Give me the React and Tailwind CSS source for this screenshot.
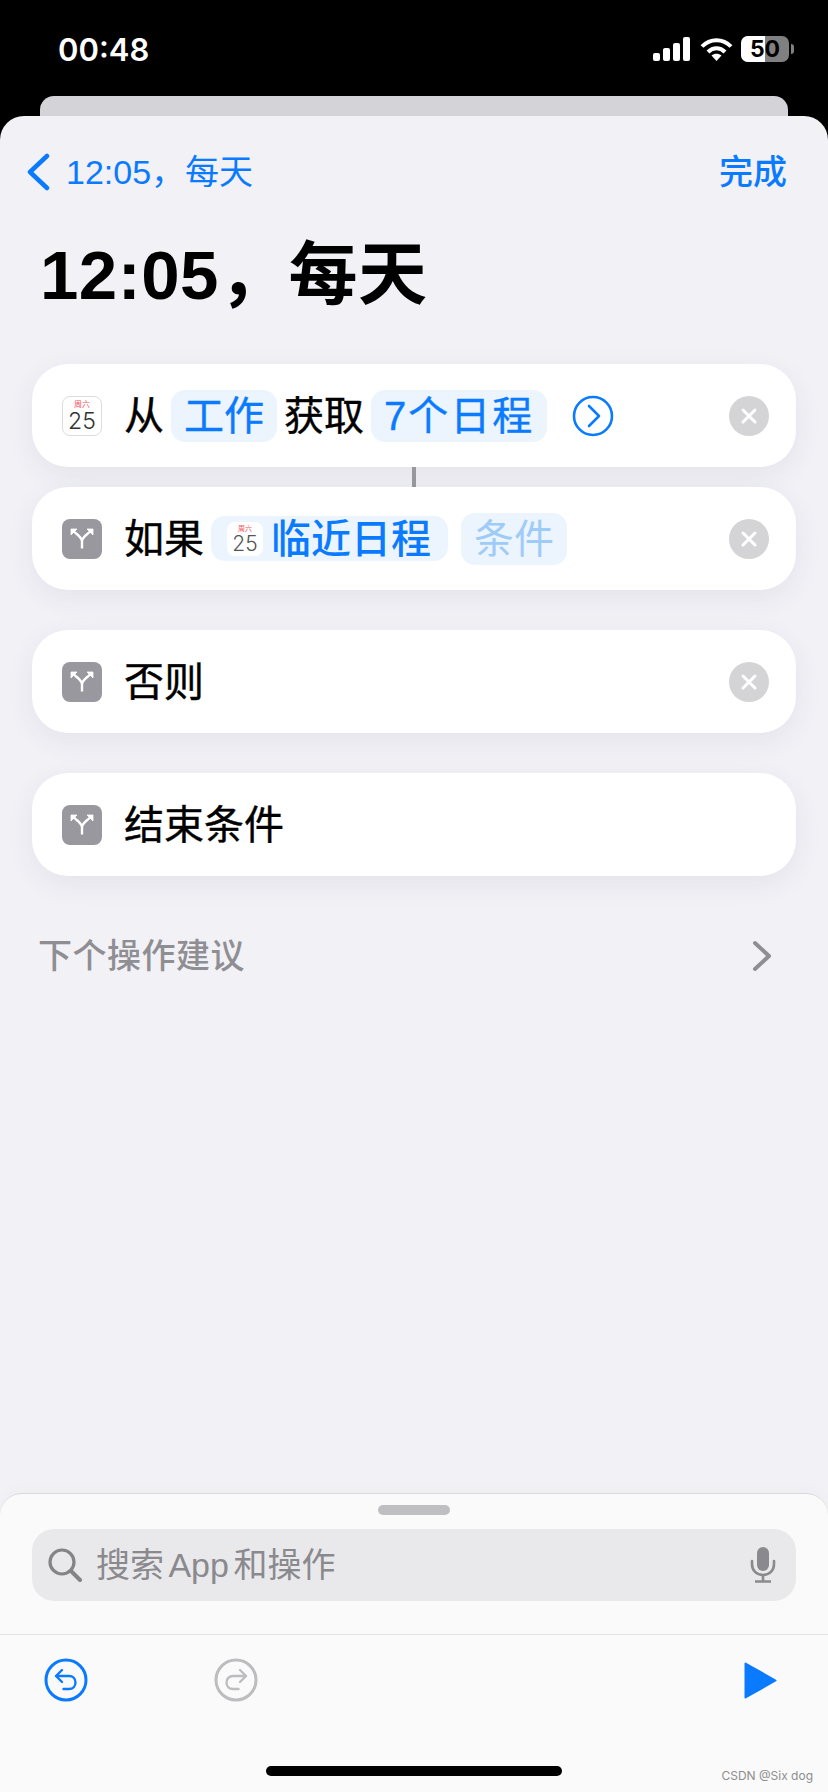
const CJK = '"Liberation Sans","Noto Sans CJK SC",sans-serif';

function CalendarIcon() {
  return (
    <div className="flex h-10 w-10 shrink-0 flex-col items-center rounded-[8px] border border-[#dcdcde] bg-white [-webkit-text-stroke:0]">
      <span className="mt-[3px] h-[9px] text-[8px] leading-[9px] font-normal text-[#f2505a]">周六</span>
      <span className="font-['Inter'] text-[23px] leading-[24px] font-light text-[#333]">25</span>
    </div>
  );
}

function SmallCalendar() {
  return (
    <div className="flex h-[34px] w-9 shrink-0 flex-col items-center rounded-[8px] bg-white [-webkit-text-stroke:0]">
      <span className="mt-[3px] h-2 text-[7px] leading-[8px] font-normal text-[#f2505a]">周六</span>
      <span className="font-['Inter'] text-[21px] leading-[22px] font-light text-[#555]">25</span>
    </div>
  );
}

function SplitIcon() {
  return (
    <div className="flex h-10 w-10 shrink-0 items-center justify-center rounded-[8px] bg-[#98989e]">
      <svg width="40" height="40" viewBox="0 0 40 40" fill="none" stroke="#fff" strokeWidth="2.4">
        <path d="M20 29.5V22C20 18.5 15.5 16 12 12.5" />
        <path d="M20 22C20 18.5 24.5 16 28 12.5" />
        <path d="M9 16V10H15Z" fill="#fff" strokeWidth="0.8" />
        <path d="M31 16V10H25Z" fill="#fff" strokeWidth="0.8" />
      </svg>
    </div>
  );
}

function CloseButton() {
  return (
    <div className="ml-auto flex h-10 w-10 shrink-0 items-center justify-center rounded-full bg-[#d4d4d6]">
      <svg width="18" height="18" viewBox="0 0 18 18" stroke="#fff" strokeWidth="3" strokeLinecap="round">
        <path d="M3 3L15 15M15 3L3 15" />
      </svg>
    </div>
  );
}

function Card({ children }) {
  return (
    <div className="flex h-[103px] items-center rounded-[36px] bg-white pr-[27px] pl-[30px] text-[40px] leading-none text-black shadow-[0_8px_28px_rgba(60,60,90,0.07)] [-webkit-text-stroke:0.4px]">
      {children}
    </div>
  );
}

function Pill({ className, children }) {
  return (
    <span className={`flex items-center rounded-[14px] bg-[#ecf5fe] text-[#0a7aff] ${className}`}>
      {children}
    </span>
  );
}

export default function App() {
  return (
    <div className="flex h-[1792px] w-[828px] flex-col overflow-hidden bg-black" style={{ fontFamily: CJK }}>
      {/* status bar */}
      <div className="flex h-24 shrink-0 items-start pt-[31px] pr-[34px] pl-[58px] text-white">
        <span className="font-['Inter'] text-[31px] leading-[38px] font-semibold">00:48</span>
        <div className="ml-auto flex items-center pt-[5px]">
          <svg width="37" height="24" viewBox="0 0 37 24" fill="#fff" className="mr-[10px]">
            <rect x="0" y="16" width="7" height="8" rx="2" />
            <rect x="10" y="11" width="7" height="13" rx="2" />
            <rect x="20" y="6" width="7" height="18" rx="2" />
            <rect x="30" y="0" width="7" height="24" rx="2" />
          </svg>
          <svg width="33" height="24" viewBox="0 0 33 24" fill="none" stroke="#fff" strokeWidth="4" className="mr-[8px]">
            <path d="M2 9.5C10 1 23 1 31 9.5" />
            <path d="M8 15C13 10 20 10 25 15" />
            <path d="M16.5 24L11.5 18.5C14.5 16 18.5 16 21.5 18.5Z" fill="#fff" stroke="none" />
          </svg>
          <div className="relative h-[26px] w-12 overflow-hidden rounded-[7px] bg-[#808080]">
            <div className="h-full w-6 bg-white" />
            <span className="absolute inset-0 flex items-center justify-center font-['Inter'] text-[23px] leading-none font-bold text-black">50</span>
          </div>
          <div className="ml-[2px] h-[10px] w-[3px] rounded-r-full bg-[#808080]" />
        </div>
      </div>

      {/* sheet behind */}
      <div className="mx-10 h-5 shrink-0 rounded-t-[14px] bg-[#d4d4d8]" />

      {/* main sheet */}
      <div className="flex min-h-0 flex-1 flex-col overflow-hidden rounded-t-[24px] bg-[#f1f1f6]">
        <div className="flex items-center pt-[36px] pr-[41px] pl-[26px] text-[#0a7aff]">
          <svg width="24" height="38" viewBox="0 0 24 38" fill="none" stroke="#0a7aff" strokeWidth="4.5" strokeLinecap="round" strokeLinejoin="round">
            <path d="M21 3L4 19L21 35" />
          </svg>
          <span className="ml-[16px] text-[34px] leading-[40px]">12:05，每天</span>
          <span className="ml-auto text-[34px] leading-[40px] font-medium">完成</span>
        </div>

        <h1 className="mt-[44px] pl-[40px] text-[69px] leading-[80px] font-bold tracking-[0.5px] text-black">12:05，每天</h1>

        <div className="mt-[48px] flex flex-col px-8">
          <Card>
            <CalendarIcon />
            <span className="ml-[22px]">从</span>
            <Pill className="ml-[7px] h-[52px] px-[13px]">工作</Pill>
            <span className="ml-[7px]">获取</span>
            <Pill className="ml-[7px] h-[52px] px-[13px] tracking-[2px]">7个日程</Pill>
            <svg width="42" height="42" viewBox="0 0 42 42" fill="none" stroke="#0a7aff" strokeWidth="2.6" strokeLinecap="round" strokeLinejoin="round" className="ml-[25px]">
              <circle cx="21" cy="21" r="19" />
              <path d="M17 11L27 21L17 31" />
            </svg>
            <CloseButton />
          </Card>
          <div className="mx-auto h-5 w-1 bg-[#98989e]" />
          <Card>
            <SplitIcon />
            <span className="ml-[22px]">如果</span>
            <Pill className="ml-[7px] h-[45px] pr-[17px] pl-4 font-medium [-webkit-text-stroke:0]">
              <SmallCalendar />
              <span className="ml-2">临近日程</span>
            </Pill>
            <Pill className="ml-[13px] h-[52px] px-[13px] text-[#9fcbf9] [-webkit-text-stroke:0]">条件</Pill>
            <CloseButton />
          </Card>
          <div className="h-10" />
          <Card>
            <SplitIcon />
            <span className="ml-[22px]">否则</span>
            <CloseButton />
          </Card>
          <div className="h-10" />
          <Card>
            <SplitIcon />
            <span className="ml-[22px]">结束条件</span>
          </Card>
        </div>

        <div className="mt-[60px] flex items-center pr-[56px] pl-[38px] text-[#8e8e93]">
          <span className="text-[34px] leading-10 font-medium tracking-[0.5px]">下个操作建议</span>
          <svg width="20" height="32" viewBox="0 0 20 32" fill="none" stroke="#8e8e93" strokeWidth="4" strokeLinecap="round" strokeLinejoin="round" className="ml-auto">
            <path d="M3 3L17 16L3 29" />
          </svg>
        </div>

        {/* bottom panel */}
        <div className="mt-auto flex h-[299px] shrink-0 flex-col rounded-t-[22px] border-t border-[#d9d9dc] bg-[#fafafb] shadow-[0_-4px_20px_rgba(0,0,0,0.02)]">
          <div className="mx-auto mt-[11px] h-[10px] w-[72px] rounded-full bg-[#bfbfc1]" />
          <div className="mx-8 mt-[14px] flex h-[72px] items-center rounded-[22px] bg-[#e9e9eb] pr-[20px] pl-4">
            <svg width="34" height="34" viewBox="0 0 34 34" fill="none" stroke="#848488" strokeWidth="3.2" strokeLinecap="round">
              <circle cx="14" cy="14" r="12" />
              <path d="M23 23L32 32" strokeWidth="4" />
            </svg>
            <span className="ml-[14px] text-[34px] leading-10 text-[#8a8a8e] [word-spacing:-5px]">搜索 App 和操作</span>
            <svg width="26" height="36" viewBox="0 0 26 36" fill="none" stroke="#8a8a8e" strokeWidth="2.6" className="ml-auto">
              <rect x="7" y="0" width="12" height="24" rx="6" fill="#8a8a8e" stroke="none" />
              <path d="M2 14V17C2 23.5 6.5 28 13 28C19.5 28 24 23.5 24 17V14" strokeLinecap="round" />
              <path d="M13 28V34M5 34.5H21" />
            </svg>
          </div>
          <div className="mt-[33px] h-px shrink-0 bg-[#e3e3e5]" />
          <div className="flex items-center pt-[23px] pr-[51px] pl-[44px]">
            <svg width="44" height="44" viewBox="0 0 44 44" fill="none" stroke="#0a7aff" strokeWidth="3" strokeLinecap="round" strokeLinejoin="round">
              <circle cx="22" cy="22" r="20" />
              <path d="M18 12L12 18L18 24" strokeWidth="2.4" />
              <path d="M12.5 18H25C29 18 31.5 21 31.5 24.5C31.5 28 29 31 25 31H19.5" strokeWidth="2.4" />
            </svg>
            <svg width="44" height="44" viewBox="0 0 44 44" fill="none" stroke="#bdbdbf" strokeWidth="3" strokeLinecap="round" strokeLinejoin="round" className="ml-[126px]">
              <circle cx="22" cy="22" r="20" />
              <path d="M26 12L32 18L26 24" strokeWidth="2.4" />
              <path d="M31.5 18H19C15 18 12.5 21 12.5 24.5C12.5 28 15 31 19 31H24.5" strokeWidth="2.4" />
            </svg>
            <svg width="33" height="37" viewBox="0 0 33 37" fill="#0a7aff" stroke="#0a7aff" strokeWidth="2" strokeLinejoin="round" className="ml-auto">
              <path d="M1.5 1.5L31.5 18.5L1.5 35.5Z" />
            </svg>
          </div>
          <div className="relative mt-auto h-[26px] shrink-0">
            <div className="mx-auto h-[10px] w-[296px] rounded-full bg-black" />
            <span className="absolute top-[2px] right-[15px] font-['Inter'] text-[12px] leading-[16px] text-[#8d8d8d]">CSDN @Six dog</span>
          </div>
        </div>
      </div>
    </div>
  );
}
